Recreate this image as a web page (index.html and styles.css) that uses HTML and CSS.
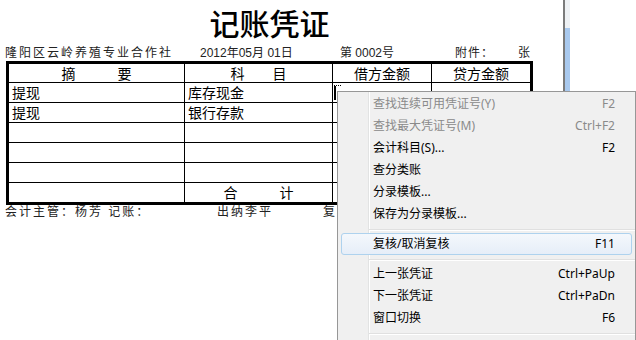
FILE: index.html
```html
<!DOCTYPE html>
<html lang="zh-CN">
<head>
    <meta charset="UTF-8">
    <title>记账凭证</title>
    <link rel="stylesheet" href="styles.css">
</head>
<body>
    <div class="page">
        <div class="sheet">
            <div class="voucher">
                <h1 class="title">记账凭证</h1>
                <div class="info">
                    <span class="org">隆阳区云岭养殖专业合作社</span>
                    <span>2012年05月 01日</span>
                    <span>第 0002号</span>
                    <span class="attach">附件：</span>
                    <span>张</span>
                </div>
                <div class="grid">
                    <div class="head">摘　　　要</div>
                    <div class="head">科　　目</div>
                    <div class="head">借方金额</div>
                    <div class="head">贷方金额</div>

                    <div>提现</div>
                    <div>库存现金</div>
                    <div class="edit"><span class="caret"></span></div>
                    <div></div>

                    <div>提现</div>
                    <div>银行存款</div>
                    <div></div>
                    <div></div>

                    <div></div><div></div><div></div><div></div>
                    <div></div><div></div><div></div><div></div>
                    <div></div><div></div><div></div><div></div>

                    <div></div>
                    <div class="head">合　　　计</div>
                    <div></div>
                    <div></div>
                </div>
                <div class="sign">
                    <span>会计主管：杨芳 记账：</span>
                    <span>出纳李平</span>
                    <span>复核：</span>
                </div>
            </div>
        </div>
        <div class="edge"></div>
        <div class="scroll"><div class="thumb"></div></div>
    </div>

    <div class="menu">
        <div class="item off"><span>查找连续可用凭证号(Y)</span><span>F2</span></div>
        <div class="item off"><span>查找最大凭证号(M)</span><span>Ctrl+F2</span></div>
        <div class="item"><span>会计科目(S)...</span><span>F2</span></div>
        <div class="item"><span>查分类账</span><span></span></div>
        <div class="item"><span>分录模板...</span><span></span></div>
        <div class="item"><span>保存为分录模板...</span><span></span></div>
        <div class="sep"></div>
        <div class="item hot"><span>复核/取消复核</span><span>F11</span></div>
        <div class="sep"></div>
        <div class="item"><span>上一张凭证</span><span>Ctrl+PaUp</span></div>
        <div class="item"><span>下一张凭证</span><span>Ctrl+PaDn</span></div>
        <div class="item"><span>窗口切换</span><span>F6</span></div>
        <div class="sep"></div>
    </div>
</body>
</html>
```

FILE: styles.css
```css
body {
    margin: 0;
    font-family: "Noto Sans CJK SC", sans-serif;
    color: #000;
    background: #fff;
}
.page {
    display: flex;
    height: 340px;
    overflow: hidden;
}
.sheet {
    width: 563px;
}
.edge {
    width: 2px;
    background: #7b7b7b;
}
.scroll {
    width: 5px;
    background: #eef1f4;
}
.thumb {
    margin-top: 28px;
    height: 63px;
    background: #a9c9ee;
}
.voucher {
    width: 528px;
    padding-left: 5px;
}
.title {
    margin: 8px 0 0 1px;
    font-family: "Liberation Sans", "Noto Sans CJK SC", sans-serif;
    font-size: 30px;
    font-weight: 500;
    line-height: 34px;
    text-align: center;
}
.info {
    display: grid;
    grid-template-columns: 195px 140px 115px 63px auto;
    margin-top: 4px;
    font-family: "Liberation Sans", "Noto Sans CJK SC", sans-serif;
    font-size: 12px;
    line-height: 15px;
    color: #222;
}
.org {
    letter-spacing: 2px;
}
.attach {
    letter-spacing: 1px;
}
.grid {
    display: grid;
    grid-template-columns: 175px 147px 98px 98px;
    grid-template-rows: 18px repeat(6, 19px);
    gap: 1px;
    width: 521px;
    margin-left: 1px;
    border: 3px solid #000;
    background: #000;
    font-size: 14px;
    line-height: 19px;
}
.grid div {
    background: #fff;
    padding-left: 3px;
    white-space: pre;
}
.grid .head {
    padding: 0;
    text-align: center;
    line-height: 18px;
}
.grid .edit {
    padding-left: 1px;
}
.caret {
    display: inline-block;
    width: 5px;
    height: 14px;
    margin-top: 2px;
    border-left: 2px solid #000;
    border-top: 1px dotted #000;
    vertical-align: top;
}
.sign {
    display: grid;
    grid-template-columns: 212px 106px auto;
    font-family: "Liberation Sans", "Noto Sans CJK SC", sans-serif;
    font-size: 12px;
    line-height: 14px;
    letter-spacing: 2px;
    color: #222;
}
.menu {
    position: absolute;
    left: 337px;
    top: 91px;
    width: 297px;
    height: 260px;
    padding-top: 1px;
    border: 1px solid #979797;
    background: linear-gradient(to right, #f0f0f0 30px, #e2e3e3 30px, #e2e3e3 31px, #fff 31px, #fff 32px, #f0f0f0 32px);
    font-family: "Noto Sans", "Noto Sans CJK SC", sans-serif;
    font-size: 12px;
}
.item {
    display: flex;
    justify-content: space-between;
    height: 22px;
    line-height: 22px;
    padding: 0 20px 0 35px;
}
.item.off {
    color: #8a8a8a;
}
.item.hot {
    box-sizing: border-box;
    margin: 0 3px;
    padding: 0 16px 0 31px;
    line-height: 20px;
    border: 1px solid #aed2ee;
    border-radius: 3px;
    background: linear-gradient(#f4f8fc, #e6eef8);
}
.sep {
    height: 8px;
    margin-left: 31px;
    background: linear-gradient(transparent 4px, #e0e0e0 4px, #e0e0e0 5px, #fff 5px, #fff 6px, transparent 6px);
}
```
